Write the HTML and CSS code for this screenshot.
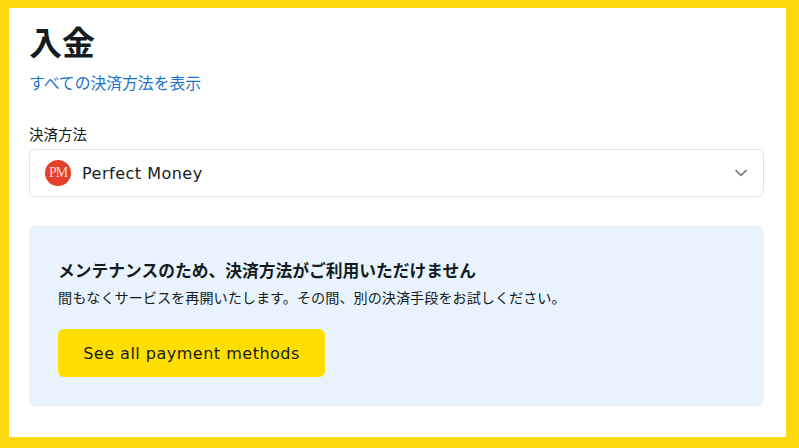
FILE: index.html
```html
<!DOCTYPE html>
<html lang="ja">
<head>
<meta charset="utf-8">
<title>入金</title>
<link rel="stylesheet" href="styles.css">
</head>
<body>
<main class="panel">
  <h1 class="title">入金</h1>
  <a class="all-link" href="#">すべての決済方法を表示</a>
  <div class="field-label">決済方法</div>
  <div class="select">
    <span class="pm-logo">PM</span>
    <span class="select-text">Perfect Money</span>
    <svg class="chevron" width="14" height="8" viewBox="0 0 14 8"><path d="M1.500 1.200 7 6.400l5.500-5.200" fill="none" stroke="#75797d" stroke-width="1.600"/></svg>
  </div>
  <section class="notice">
    <h2 class="notice-title">メンテナンスのため、決済方法がご利用いただけません</h2>
    <p class="notice-text">間もなくサービスを再開いたします。その間、別の決済手段をお試しください。</p>
    <button class="cta" type="button">See all payment methods</button>
  </section>
</main>
</body>
</html>
```
FILE: styles.css
```css
* { box-sizing: border-box; }
html, body { margin: 0; height: 100%; }
body {
  background: #ffd910;
  padding: 8px 13px 11px 9px;
  font-family: "DejaVu Sans", "Noto Sans CJK JP", sans-serif;
  color: #141c22;
  overflow: hidden;
}
.panel {
  background: #fff;
  height: 429px;
  padding: 12px 22px 0 20px;
  display: flex;
  flex-direction: column;
}
.title {
  margin: 0;
  font-family: "Noto Sans CJK JP", sans-serif;
  font-size: 33px;
  line-height: 42px;
  font-weight: 700;
}
.all-link {
  margin-top: 9px;
  font-family: "Noto Sans CJK JP", sans-serif;
  font-size: 15.800px;
  line-height: 24px;
  color: #1b74c8;
  text-decoration: none;
  align-self: flex-start;
}
.field-label {
  margin-top: 29px;
  font-family: "Noto Sans CJK JP", sans-serif;
  font-size: 14.500px;
  line-height: 20px;
}
.select {
  margin-top: 5px;
  height: 48px;
  border: 1px solid #e3e4e5;
  border-radius: 6px;
  display: flex;
  align-items: center;
  padding: 0 15px;
}
.pm-logo {
  width: 26px;
  height: 26px;
  border-radius: 50%;
  background: #e53e2a;
  color: #fbdcd6;
  font-family: "Liberation Serif", serif;
  font-size: 14px;
  letter-spacing: -1px;
  display: flex;
  align-items: center;
  justify-content: center;
}
.select-text {
  margin-left: 11px;
  font-size: 16px;
  letter-spacing: 0.500px;
  flex: 1;
}
.notice {
  margin-top: 29px;
  height: 180px;
  background: #e8f3fd;
  border-radius: 6px;
  padding: 30px 29px 0;
}
.notice-title {
  margin: 0;
  font-family: "Noto Sans CJK JP", sans-serif;
  font-size: 16.750px;
  line-height: 28px;
  font-weight: 700;
}
.notice-text {
  margin: 2px 0 0;
  font-family: "Noto Sans CJK JP", sans-serif;
  font-size: 14.150px;
  line-height: 22px;
}
.cta {
  display: block;
  margin-top: 21px;
  width: 267px;
  height: 48px;
  border: 0;
  border-radius: 6px;
  background: #ffde00;
  color: #141c22;
  font-family: "DejaVu Sans", sans-serif;
  font-size: 16px;
  letter-spacing: 0.500px;
}
```
